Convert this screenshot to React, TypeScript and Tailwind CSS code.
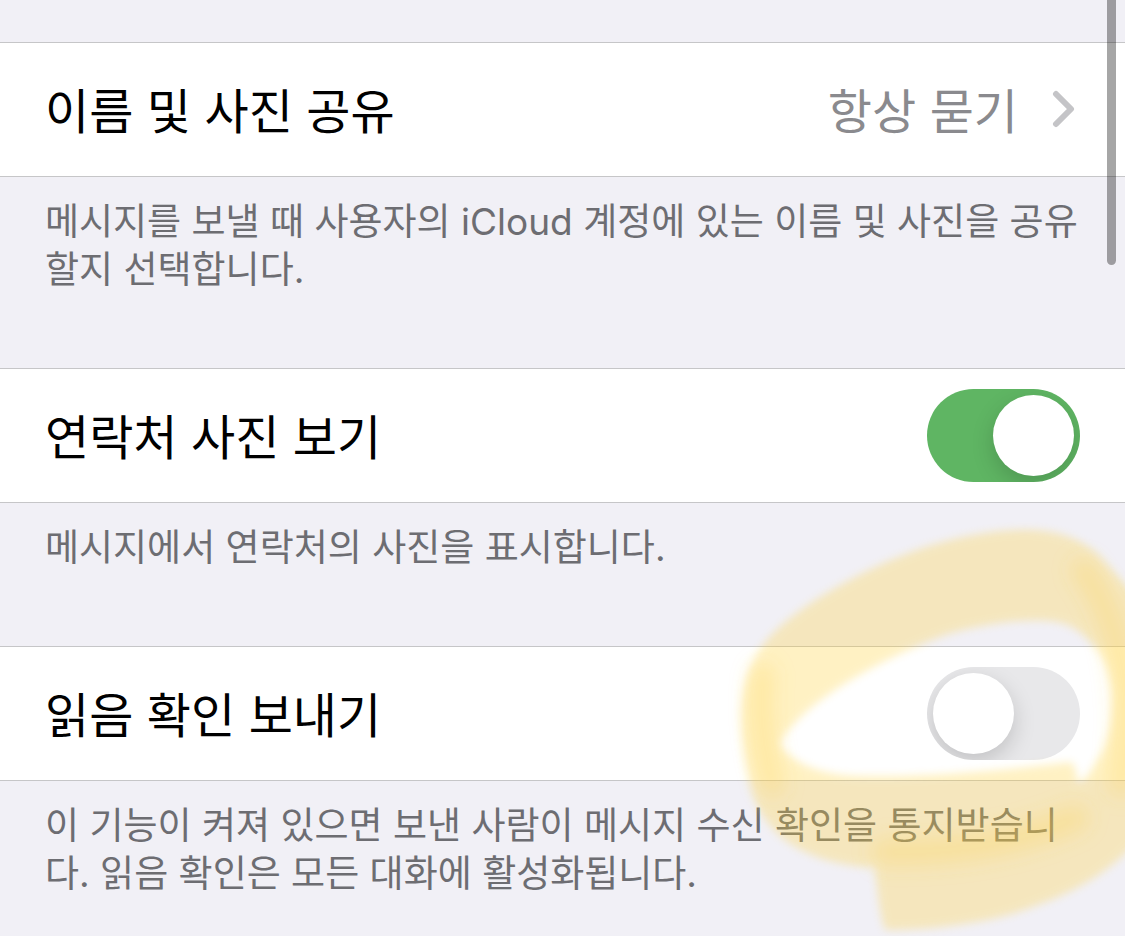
import { useState } from "react";
import type { ReactNode } from "react";

function Row({ children }: { children: ReactNode }) {
  return (
    <div className="flex h-[135px] items-center justify-between border-y border-[#c6c6c8] bg-white px-[45px] text-[48px] leading-[60px] text-black">
      {children}
    </div>
  );
}

function Caption({ id, children }: { id: string; children: ReactNode }) {
  return (
    <p id={id} className="px-[45px] pt-[21px] pb-[74px] text-[37px] leading-[48px] text-[#6d6d72]">
      {children}
    </p>
  );
}

function Toggle({ id, initial }: { id: string; initial: boolean }) {
  const [on, setOn] = useState(initial);
  return (
    <input
      id={id}
      type="checkbox"
      role="switch"
      checked={on}
      aria-describedby={id + "-note"}
      onChange={(e) => setOn(e.target.checked)}
      className="flex h-[93px] w-[153px] shrink-0 appearance-none items-center overflow-hidden rounded-full bg-[#e8e8ea] p-[6px] before:size-[81px] before:rounded-full before:bg-white before:shadow-[0_8px_22px_rgba(0,0,0,0.17)] checked:justify-end checked:bg-[#5fb563]"
    />
  );
}

function Highlighter() {
  return (
    <svg
      aria-hidden="true"
      viewBox="0 0 400 426"
      className="pointer-events-none absolute right-0 bottom-0 h-[426px] w-[400px]"
    >
      <defs>
        <filter id="soft" x="-10%" y="-10%" width="120%" height="120%">
          <feGaussianBlur stdDeviation="4" />
        </filter>
        <filter id="wide" x="-60%" y="-60%" width="220%" height="220%">
          <feGaussianBlur stdDeviation="10" />
        </filter>
      </defs>
      <g fill="#ffd035" opacity="0.29" filter="url(#soft)">
        <path d="M346 252 C350 256 352 262 353 275 L356 350 C290 352 200 362 130 356 C75 348 42 325 28 285 C18 250 14 215 17 190 C22 145 45 122 80 97 C135 60 210 24 290 20 C330 18 358 28 378 50 L412 88 L412 270 L372 250 C384 235 388 205 387 180 C383 150 370 130 345 116 C325 106 270 110 220 125 C165 145 100 180 70 213 C60 223 54 232 56 236 C65 250 90 264 130 266 C200 268 280 260 346 252 Z" />
        <path d="M372 250 C366 262 360 270 351 275 C320 292 270 310 220 322 L148 345 C152 370 153 400 160 420 C210 420 270 412 310 396 C350 382 384 362 412 332 L412 240 Z" />
      </g>
      <g fill="none" stroke="#ffd040" strokeOpacity="0.26" strokeLinecap="round" filter="url(#wide)">
        <path d="M38 165 C34 200 38 240 48 275" strokeWidth="24" />
        <path d="M358 60 C402 120 408 200 396 275" strokeWidth="24" />
        <path d="M160 342 C220 343 290 335 350 308" strokeWidth="28" />
      </g>
    </svg>
  );
}

export default function App() {
  return (
    <main
      lang="ko"
      className="relative min-h-screen overflow-hidden bg-[#f1f0f6] pt-[42px] font-['Inter','Noto_Sans_CJK_KR',sans-serif]"
    >
      <section>
        <Row>
          <a href="#name-photo" aria-describedby="share-note" className="flex grow items-center justify-between">
            <span className="pt-[4px]">이름 및 사진 공유</span>
            <span className="flex items-center gap-[34px] text-[#8a8a8e]">
              <span className="pt-[4px]">항상 묻기</span>
              <svg
                aria-hidden="true"
                viewBox="0 0 28 40"
                className="h-[40px] w-[28px] fill-none stroke-[#c4c4c7]"
                strokeWidth="6"
                strokeLinecap="round"
                strokeLinejoin="round"
              >
                <path d="M4 4 L19 19 L4 34" />
              </svg>
            </span>
          </a>
        </Row>
        <Caption id="share-note">
          메시지를 보낼 때 사용자의 iCloud 계정에 있는 이름 및 사진을 공유할지 선택합니다.
        </Caption>
      </section>

      <section>
        <Row>
          <label htmlFor="photos" className="pt-[4px]">연락처 사진 보기</label>
          <Toggle id="photos" initial={true} />
        </Row>
        <Caption id="photos-note">메시지에서 연락처의 사진을 표시합니다.</Caption>
      </section>

      <section>
        <Row>
          <label htmlFor="receipts" className="pt-[4px]">읽음 확인 보내기</label>
          <Toggle id="receipts" initial={false} />
        </Row>
        <div className="relative -mb-[36px]">
          <Caption id="receipts-note">
            이 기능이 켜져 있으면 보낸 사람이 메시지 수신 확인을 통지받습니다. 읽음 확인은 모든 대화에 활성화됩니다.
          </Caption>
          <div className="pointer-events-none absolute inset-x-0 -top-[271px] h-[426px]">
            <Highlighter />
          </div>
        </div>
      </section>

      <div className="absolute top-0 right-[9px] h-[265px] w-[9px] rounded-b-full bg-black/35" />
    </main>
  );
}
